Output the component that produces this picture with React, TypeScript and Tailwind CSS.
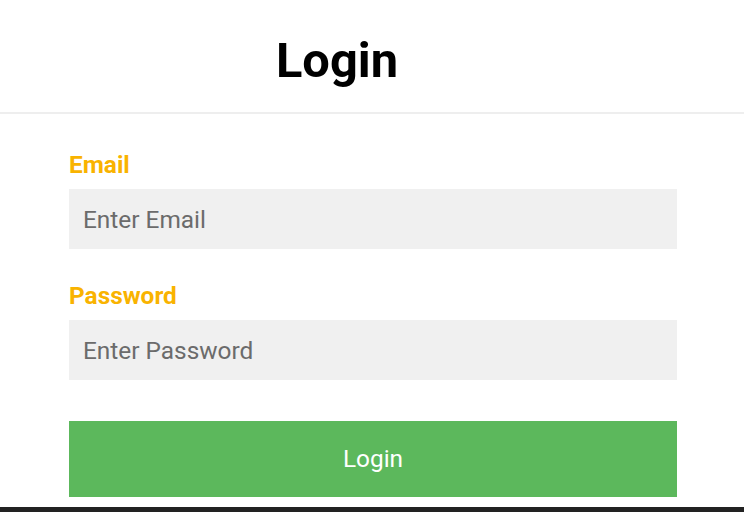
import React from "react";

export default function App() {
  return (
    <div className="min-h-[512px] bg-white" style={{ fontFamily: "Roboto, 'Liberation Sans', sans-serif" }}>
      <header className="h-[112px] border-b-2 border-[#eeeeee] box-content">
        <div className="w-[674px] pt-[33px] text-center">
          <h1 className="text-[48.8px] font-bold leading-[56px] text-black">Login</h1>
        </div>
      </header>
      <form className="mx-[69px] w-[608px] pt-[37px]" onSubmit={(e) => e.preventDefault()}>
        <label className="block text-[24.4px] font-bold leading-[28px] text-[#f9b300]">Email</label>
        <input
          type="email"
          placeholder="Enter Email"
          className="mt-[10px] block h-[60px] w-full bg-[#f0f0f0] px-[14px] text-[24.4px] text-[#333] outline-none placeholder:text-[#6b6b6b]"
        />
        <label className="mt-[33px] block text-[24.4px] font-bold leading-[28px] text-[#f9b300]">Password</label>
        <input
          type="password"
          placeholder="Enter Password"
          className="mt-[10px] block h-[60px] w-full bg-[#f0f0f0] px-[14px] text-[24.4px] text-[#333] outline-none placeholder:text-[#6b6b6b]"
        />
        <button
          type="submit"
          className="mt-[41px] block h-[76px] w-full bg-[#5cb85c] text-[24.4px] text-white"
        >
          Login
        </button>
      </form>
      <div className="mt-[10px] h-[20px] bg-[#222222]" />
    </div>
  );
}
